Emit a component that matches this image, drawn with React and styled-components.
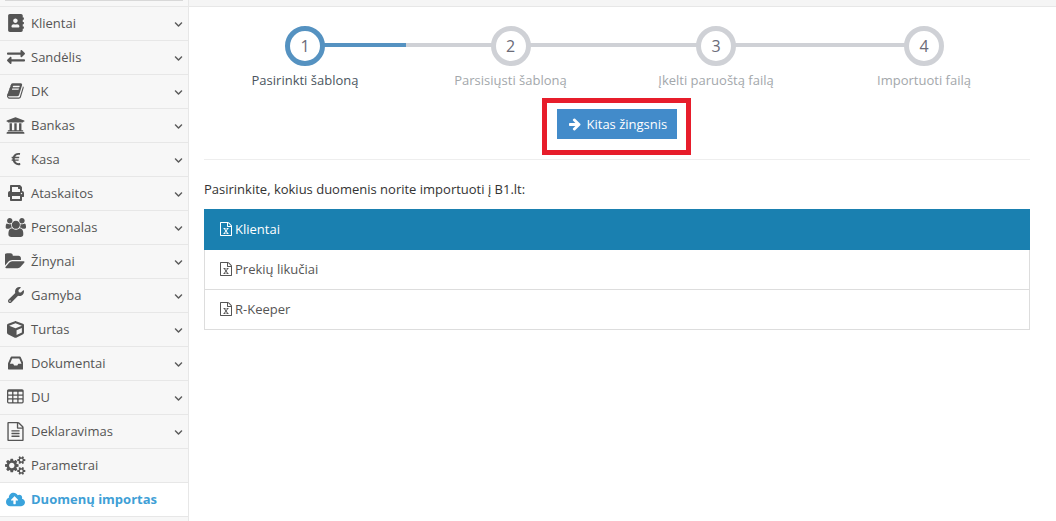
import React from 'react';
import styled, { createGlobalStyle } from 'styled-components';
import {
  FaAddressBook, FaExchangeAlt, FaUniversity, FaEuroSign, FaPrint,
  FaWrench, FaCube, FaCloudUploadAlt, FaChevronDown,
} from 'react-icons/fa';

const Global = createGlobalStyle`
  html, body { margin: 0; padding: 0; background: #fff; }
  body { font-family: "Open Sans", "Liberation Sans", sans-serif; font-size: 13px; color: #333; }
  * { box-sizing: border-box; }
`;

const Page = styled.div`
  display: flex;
  width: 1056px;
  height: 521px;
  overflow: hidden;
`;

const Sidebar = styled.nav`
  width: 189px;
  flex: none;
  background: #f7f7f7;
  border-right: 1px solid #e7e7e7;
  display: flex;
  flex-direction: column;
`;

const SideTop = styled.div`
  height: 7px;
  flex: none;
  padding: 0 5px;
  border-bottom: 1px solid #e7e7e7;
`;

const SideTopLine = styled.div`
  height: 1px;
  background: #d8d8d8;
`;

const Item = styled.a`
  height: 34px;
  flex: none;
  display: flex;
  align-items: center;
  padding: 0 5px 1px 6px;
  border-bottom: 1px solid #e7e7e7;
  background: ${p => (p.$active ? '#fff' : 'transparent')};
  color: ${p => (p.$active ? '#3f9fd6' : '#555')};
  font-weight: ${p => (p.$active ? 700 : 400)};
  font-size: 13px;
`;

const IconBox = styled.span`
  width: 19px;
  margin-right: 6px;
  flex: none;
  display: flex;
  justify-content: center;
  color: ${p => (p.$active ? '#3aa3dc' : '#555')};
  svg { display: block; flex: none; }
`;

const Label = styled.span`
  flex: 1;
  white-space: nowrap;
`;

const Chevron = styled(FaChevronDown)`
  font-size: 9px;
  color: #5c5c5c;
  margin-top: 3px;
`;

const Main = styled.main`
  flex: 1;
  display: flex;
  flex-direction: column;
  min-width: 0;
`;

const TopStrip = styled.div`
  height: 7px;
  flex: none;
  background: #f5f5f5;
  border-bottom: 1px solid #e7e7e7;
`;

const Content = styled.div`
  width: 841px;
  margin-left: 15px;
  display: flex;
  flex-direction: column;
`;

const Steps = styled.div`
  display: grid;
  grid-template-columns: 206px 205px 206px 210px;
  margin-left: -2px;
  margin-top: 19px;
`;

const Step = styled.div`
  position: relative;
  display: flex;
  flex-direction: column;
  align-items: center;
  color: ${p => (p.$active ? '#4a5560' : '#a3a7ab')};
`;

const Track = styled.div`
  position: absolute;
  top: 17px;
  left: 50%;
  width: 100%;
  height: 4px;
  background: linear-gradient(to right, ${p => p.$fill} 49%, #cfd1d6 49%);
`;

const Circle = styled.div`
  position: relative;
  width: 40px;
  height: 40px;
  border-radius: 50%;
  background: #fff;
  border: 5px solid ${p => (p.$active ? '#5592c1' : '#cfd1d6')};
  color: #6b6b78;
  font-size: 16px;
  display: flex;
  align-items: center;
  justify-content: center;
`;

const StepLabel = styled.div`
  margin-top: 5px;
  font-size: 13px;
  line-height: 18px;
  white-space: nowrap;
`;

const ButtonRow = styled.div`
  display: flex;
  justify-content: center;
  width: 824px;
  margin-top: 9px;
`;

const Highlight = styled.div`
  border: 5px solid #e71d2b;
  padding: 6px 9px 11px 10px;
`;

const NextButton = styled.button`
  display: flex;
  align-items: center;
  gap: 5px;
  width: 120px;
  height: 30px;
  padding: 0 0 0 11px;
  border: 0;
  background: #428bca;
  color: #fff;
  font: 400 13px "Open Sans", sans-serif;
  white-space: nowrap;
`;

const Divider = styled.hr`
  width: 826px;
  margin: 4px 0 0;
  border: 0;
  border-top: 1px solid #eee;
`;

const Prompt = styled.p`
  margin: 20px 0 0;
  font-size: 13px;
  line-height: 18px;
  color: #333;
`;

const List = styled.div`
  width: 826px;
  margin-top: 11px;
  display: flex;
  flex-direction: column;
`;

const Row = styled.div`
  height: ${p => (p.$active ? '41px' : '40px')};
  display: flex;
  align-items: center;
  gap: 2px;
  padding: 0 14px 1px;
  border: 1px solid ${p => (p.$active ? '#1a80b0' : '#ddd')};
  border-top-width: ${p => (p.$active ? '1px' : 0)};
  background: ${p => (p.$active ? '#1a80b0' : '#fff')};
  color: ${p => (p.$active ? '#fff' : '#555')};
  font-size: 13px;
`;

const Glyph = ({ d, vb = 1792, h }) => (
  <svg width={(vb / 1792) * h} height={h} viewBox={`0 0 ${vb} 1792`} fill="currentColor">
    <path d={d} />
  </svg>
);

const P = {
  book: 'M1639 478q40 57 18 129l-275 906q-19 64-76.5 107.5t-122.5 43.5h-923q-77 0-148.5-53.5t-99.5-131.5q-24-67-2-127 0-4 3-27t4-37q1-8-3-21.5t-3-19.5q2-11 8-21t16.5-23.5 16.5-23.5q23-38 45-91.5t30-91.5q3-10 .5-30t-.5-28q3-11 17-28t17-23q21-36 42-92t25-90q1-9-2.5-32t.5-28q4-13 22-30.5t22-22.5q19-26 42.5-84.5t27.5-96.5q1-8-3-25.5t-2-26.5q2-8 9-18t18-23 17-21q8-12 16.5-30.5t15-35 16-36 19.5-32 26.5-23.5 36-11.5 47.5 5.5l-1 3q38-9 51-9h761q74 0 114 56t18 130l-274 906q-36 119-71.5 153.5t-128.5 34.5h-869q-27 0-38 15-11 16-1 43 24 70 144 70h923q29 0 56-15.5t35-41.5l300-987q7-22 5-57 38 15 59 43zm-1064 2q-4 13 2 22.5t20 9.5h608q13 0 25.5-9.5t16.5-22.5l21-64q4-13-2-22.5t-20-9.5h-608q-13 0-25.5 9.5t-16.5 22.5zm-83 256q-4 13 2 22.5t20 9.5h608q13 0 25.5-9.5t16.5-22.5l21-64q4-13-2-22.5t-20-9.5h-608q-13 0-25.5 9.5t-16.5 22.5z',
  users: 'M657 896q-162 5-265 128h-134q-82 0-138-40.5t-56-118.5q0-353 124-353 6 0 43.5 21t97.5 42.5 119 21.5q67 0 133-23-5 37-5 66 0 139 81 256zm1071 637q0 120-73 189.5t-194 69.5h-874q-121 0-194-69.5t-73-189.5q0-53 3.5-103.5t14-109 26.5-108.5 43-97.5 62-81 85.5-53.5 111.5-20q10 0 43 21.5t73 48 107 48 135 21.5 135-21.5 107-48 73-48 43-21.5q61 0 111.5 20t85.5 53.5 62 81 43 97.5 26.5 108.5 14 109 3.5 103.5zm-1024-1277q0 106-75 181t-181 75-181-75-75-181 75-181 181-75 181 75 75 181zm704 384q0 159-112.5 271.5t-271.5 112.5-271.5-112.5-112.5-271.5 112.5-271.5 271.5-112.5 271.5 112.5 112.5 271.5zm576 225q0 78-56 118.5t-138 40.5h-134q-103-123-265-128 81-117 81-256 0-29-5-66 66 23 133 23 59 0 119-21.5t97.5-42.5 43.5-21q124 0 124 353zm-128-609q0 106-75 181t-181 75-181-75-75-181 75-181 181-75 181 75 75 181z',
  inbox: 'M1023 960h316q-1-3-2.5-8.5t-2.5-7.5l-212-496h-708l-212 496q-1 3-2.5 8.5t-2.5 7.5h316l95 192h320zm513 30v482q0 26-19 45t-45 19h-1408q-26 0-45-19t-19-45v-482q0-62 25-123l238-552q10-25 36.5-42t52.5-17h832q26 0 52.5 17t36.5 42l238 552q25 61 25 123z',
  table: 'M512 1376v-192q0-14-9-23t-23-9h-320q-14 0-23 9t-9 23v192q0 14 9 23t23 9h320q14 0 23-9t9-23zm0-384v-192q0-14-9-23t-23-9h-320q-14 0-23 9t-9 23v192q0 14 9 23t23 9h320q14 0 23-9t9-23zm512 384v-192q0-14-9-23t-23-9h-320q-14 0-23 9t-9 23v192q0 14 9 23t23 9h320q14 0 23-9t9-23zm-512-768v-192q0-14-9-23t-23-9h-320q-14 0-23 9t-9 23v192q0 14 9 23t23 9h320q14 0 23-9t9-23zm512 384v-192q0-14-9-23t-23-9h-320q-14 0-23 9t-9 23v192q0 14 9 23t23 9h320q14 0 23-9t9-23zm512 384v-192q0-14-9-23t-23-9h-320q-14 0-23 9t-9 23v192q0 14 9 23t23 9h320q14 0 23-9t9-23zm-512-768v-192q0-14-9-23t-23-9h-320q-14 0-23 9t-9 23v192q0 14 9 23t23 9h320q14 0 23-9t9-23zm512 384v-192q0-14-9-23t-23-9h-320q-14 0-23 9t-9 23v192q0 14 9 23t23 9h320q14 0 23-9t9-23zm0-384v-192q0-14-9-23t-23-9h-320q-14 0-23 9t-9 23v192q0 14 9 23t23 9h320q14 0 23-9t9-23zm128-320v1088q0 66-47 113t-113 47h-1344q-66 0-113-47t-47-113v-1088q0-66 47-113t113-47h1344q66 0 113 47t47 113z',
  fileText: 'M1596 380q28 28 48 76t20 88v1152q0 40-28 68t-68 28h-1344q-40 0-68-28t-28-68v-1600q0-40 28-68t68-28h896q40 0 88 20t76 48zm-444-244v376h376q-10-29-22-41l-313-313q-12-12-41-22zm384 1528v-1024h-416q-40 0-68-28t-28-68v-416h-768v1536h1280zm-1024-864q0-14 9-23t23-9h704q14 0 23 9t9 23v64q0 14-9 23t-23 9h-704q-14 0-23-9t-9-23v-64zm736 224q14 0 23 9t9 23v64q0 14-9 23t-23 9h-704q-14 0-23-9t-9-23v-64q0-14 9-23t23-9h704zm0 256q14 0 23 9t9 23v64q0 14-9 23t-23 9h-704q-14 0-23-9t-9-23v-64q0-14 9-23t23-9h704z',
  fileExcel: 'M1596 380q28 28 48 76t20 88v1152q0 40-28 68t-68 28h-1344q-40 0-68-28t-28-68v-1600q0-40 28-68t68-28h896q40 0 88 20t76 48zm-444-244v376h376q-10-29-22-41l-313-313q-12-12-41-22zm384 1528v-1024h-416q-40 0-68-28t-28-68v-416h-768v1536h1280zm-979-234v106h281v-106h-75l103-161q5-7 10-16.5t7.5-13.5 3.5-4h2q1 4 5 10 2 4 4.5 7.5t6 8 6.5 8.5l107 161h-76v106h291v-106h-68l-192-273 195-282h67v-107h-279v107h74l-103 159q-4 7-10 16.5t-9 13.5l-2 3h-2q-1-4-5-10-6-11-17-23l-106-159h76v-107h-290v107h68l189 272-194 283h-68z',
  folder: 'M1845 931q0 35-35 74l-336 396q-43 51-120.5 86.5t-143.5 35.5h-1088q-34 0-60.5-13t-26.5-39q0-35 35-74l336-396q43-51 120.5-86.5t143.5-35.5h1088q34 0 60.5 13t26.5 39zm-343-344v160h-832q-94 0-197 47.5t-164 119.5l-337 396-5 6q0-4-.5-12.5t-.5-12.5v-960q0-92 66-158t158-66h320q92 0 158 66t66 158v32h544q92 0 158 66t66 158z',
  cogs: 'M896 896q0-106-75-181t-181-75-181 75-75 181 75 181 181 75 181-75 75-181zm768 512q0-52-38-90t-90-38-90 38-38 90q0 53 37.5 90.5t90.5 37.5 90.5-37.5 37.5-90.5zm0-1024q0-52-38-90t-90-38-90 38-38 90q0 53 37.5 90.5t90.5 37.5 90.5-37.5 37.5-90.5zm-384 421v185q0 10-7 19.5t-16 10.5l-155 24q-11 35-32 76 34 48 90 115 7 11 7 20 0 12-7 19-23 30-82.5 89.5t-78.5 59.5q-11 0-21-7l-115-90q-37 19-77 31-11 108-23 155-7 24-30 24h-186q-11 0-20-7.5t-10-17.5l-23-153q-34-10-75-31l-118 89q-7 7-20 7-11 0-21-8-144-133-144-160 0-9 7-19 10-14 41-53t47-61q-23-44-35-82l-152-24q-10-1-17-9.5t-7-19.5v-185q0-10 7-19.5t16-10.5l155-24q11-35 32-76-34-48-90-115-7-11-7-19 0-12 7-20 22-30 82-89t79-59q11 0 21 7l115 90q34-18 77-32 11-108 23-154 7-24 30-24h186q11 0 20 7.5t10 17.5l23 153q34 10 75 31l118-89q8-7 20-7 11 0 21 8 144 133 144 160 0 8-7 19-12 16-42 54t-45 60q23 48 34 82l152 23q10 2 17 10.5t7 19.5zm640 533v140q0 16-149 31-12 27-30 52 51 113 51 138 0 4-4 7-122 71-124 71-8 0-46-47t-52-68q-20 2-30 2t-30-2q-14 21-52 68t-46 47q-2 0-124-71-4-3-4-7 0-25 51-138-18-25-30-52-149-15-149-31v-140q0-16 149-31 13-29 30-52-51-113-51-138 0-4 4-7 4-2 35-20t59-34 30-16q8 0 46 46.5t52 67.5q20-2 30-2t30 2q51-71 92-112l6-2q4 0 124 70 4 3 4 7 0 25-51 138 17 23 30 52 149 15 149 31zm0-1024v140q0 16-149 31-12 27-30 52 51 113 51 138 0 4-4 7-122 71-124 71-8 0-46-47t-52-68q-20 2-30 2t-30-2q-14 21-52 68t-46 47q-2 0-124-71-4-3-4-7 0-25 51-138-18-25-30-52-149-15-149-31v-140q0-16 149-31 13-29 30-52-51-113-51-138 0-4 4-7 4-2 35-20t59-34 30-16q8 0 46 46.5t52 67.5q20-2 30-2t30 2q51-71 92-112l6-2q4 0 124 70 4 3 4 7 0 25-51 138 17 23 30 52 149 15 149 31z',
  arrow: 'M1600 960q0 54-37 91l-651 651q-39 37-91 37-51 0-90-37l-75-75q-38-38-38-91t38-91l293-293h-704q-52 0-84.5-37.5t-32.5-90.5v-128q0-53 32.5-90.5t84.5-37.5h704l-293-294q-38-36-38-90t38-90l75-75q38-38 90-38 53 0 91 38l651 651q37 35 37 90z',
};

const menu = [
  [<FaAddressBook size={18} />, 'Klientai'],
  [<FaExchangeAlt size={18} />, 'Sandėlis'],
  [<Glyph d={P.book} vb={1664} h={18} />, 'DK'],
  [<FaUniversity size={19} />, 'Bankas'],
  [<FaEuroSign size={14} />, 'Kasa'],
  [<FaPrint size={16} />, 'Ataskaitos'],
  [<Glyph d={P.users} vb={1920} h={19} />, 'Personalas'],
  [<Glyph d={P.folder} vb={1920} h={19} />, 'Žinynai'],
  [<FaWrench size={16} />, 'Gamyba'],
  [<FaCube size={17} />, 'Turtas'],
  [<Glyph d={P.inbox} vb={1536} h={18} />, 'Dokumentai'],
  [<Glyph d={P.table} vb={1664} h={18} />, 'DU'],
  [<Glyph d={P.fileText} h={19} />, 'Deklaravimas'],
  [<Glyph d={P.cogs} vb={1920} h={19} />, 'Parametrai', true],
];

const steps = [
  ['1', 'Pasirinkti šabloną'],
  ['2', 'Parsisiųsti šabloną'],
  ['3', 'Įkelti paruoštą failą'],
  ['4', 'Importuoti failą'],
];

const files = ['Klientai', 'Prekių likučiai', 'R-Keeper'];

export default function App() {
  return (
    <>
      <Global />
      <Page>
        <Sidebar>
          <SideTop><SideTopLine /></SideTop>
          {menu.map(([icon, text, noArrow]) => (
            <Item key={text}>
              <IconBox>{icon}</IconBox>
              <Label>{text}</Label>
              {!noArrow && <Chevron />}
            </Item>
          ))}
          <Item $active>
            <IconBox $active><FaCloudUploadAlt size={19} /></IconBox>
            <Label>Duomenų importas</Label>
          </Item>
        </Sidebar>
        <Main>
          <TopStrip />
          <Content>
            <Steps>
              {steps.map(([n, text], i) => (
                <Step key={n} $active={i === 0}>
                  {i < 3 && <Track $fill={i === 0 ? '#5592c1' : '#cfd1d6'} />}
                  <Circle $active={i === 0}>{n}</Circle>
                  <StepLabel>{text}</StepLabel>
                </Step>
              ))}
            </Steps>
            <ButtonRow>
              <Highlight>
                <NextButton><Glyph d={P.arrow} h={14} /> Kitas žingsnis</NextButton>
              </Highlight>
            </ButtonRow>
            <Divider />
            <Prompt>Pasirinkite, kokius duomenis norite importuoti į B1.lt:</Prompt>
            <List>
              {files.map((f, i) => (
                <Row key={f} $active={i === 0}>
                  <Glyph d={P.fileExcel} h={14} /> {f}
                </Row>
              ))}
            </List>
          </Content>
        </Main>
      </Page>
    </>
  );
}
